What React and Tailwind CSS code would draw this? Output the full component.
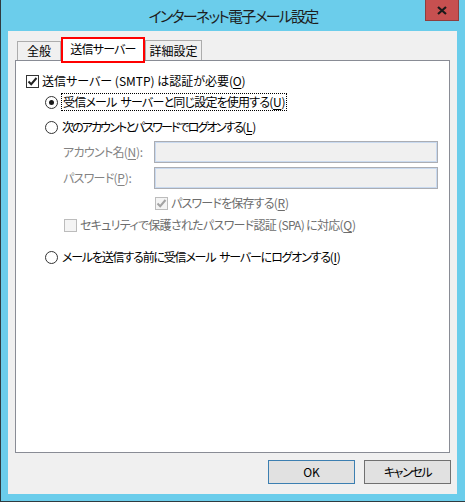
import React from "react";

const font = 'font-["Noto_Sans_CJK_JP",sans-serif] [font-feature-settings:"palt"_1]';

const Check = ({ checked, disabled }) => (
  <span
    className={`flex w-[13px] h-[13px] shrink-0 items-center justify-center border ${
      disabled ? "border-[#bcbcbc] bg-[#f4f4f4]" : "border-[#333333] bg-white"
    }`}
  >
    {checked && (
      <svg width="11" height="11" viewBox="0 0 11 11">
        <path
          d="M1.5 5.5 L4.2 8.2 L9.5 2"
          fill="none"
          stroke={disabled ? "#a3a3a3" : "#222222"}
          strokeWidth="2"
        />
      </svg>
    )}
  </span>
);

const Radio = ({ checked }) => (
  <span className="flex w-[13px] h-[13px] shrink-0 items-center justify-center rounded-full border border-[#333333] bg-white">
    {checked && <span className="w-[5px] h-[5px] rounded-full bg-[#1a1a1a]" />}
  </span>
);

const Key = ({ k }) => (
  <span className="tracking-[-0.3px]">
    (<span className="underline underline-offset-2">{k}</span>)
  </span>
);

const Gap = () => <span className="inline-block w-[4px]" />;

const Field = ({ label, k }) => (
  <div className="flex h-[22px] items-center">
    <span className="w-[91px] pl-[47px] box-content text-[#838383] whitespace-nowrap tracking-[-0.7px]">
      {label}
      <Key k={k} />:
    </span>
    <div className="h-[22px] w-[284px] border border-[#abadb3] bg-[#f0f0f0] shadow-[inset_0_0_0_1px_#c9daf0]" />
  </div>
);

export default function App() {
  return (
    <div
      className={`${font} w-[465px] h-[502px] bg-[#6bcdeb] border-l border-b border-[#2f3b40] flex flex-col text-[12px] leading-[18px] text-black`}
    >
      <div className="relative h-[31px] shrink-0">
        <div className="pt-[5px] text-center text-[15px] leading-[22px] text-[#1e1e1e] tracking-[-1.8px]">
          インターネット電子メール設定
        </div>
        <div className="absolute right-[6px] top-0 flex h-[21px] w-[34px] items-center justify-center border border-t-0 border-[#8e3e3e] bg-[#c75050]">
          <svg width="10" height="9" viewBox="0 0 10 9">
            <path d="M1 1 L9 8 M9 1 L1 8" stroke="#1a1a1a" strokeWidth="2.2" />
          </svg>
        </div>
      </div>

      <div className="ml-[7px] w-[449px] h-[463px] bg-[#f0f0f0] flex flex-col">
        <div className="mt-[6px] ml-[9px] flex h-[23px] items-end">
          <div className="h-[19px] w-[44px] border border-b-0 border-[#acacac] bg-[#f0f0f0] text-center leading-[18px]">
            全般
          </div>
          <div className="relative z-10 -mb-[3px] h-[26px] w-[84px] border-2 border-[#ff0000] bg-white text-center leading-[20px] tracking-[-0.8px]">
            送信サーバー
          </div>
          <div className="h-[20px] w-[57px] border border-b-0 border-[#acacac] bg-[#f0f0f0] text-center leading-[19px]">
            詳細設定
          </div>
        </div>

        <div className="ml-[7px] h-[393px] w-[435px] border border-[#898c95] bg-white pt-[11px] pl-[10px] flex flex-col">
          <div className="flex h-[18px] items-center gap-[3px]">
            <Check checked />
            <span className="whitespace-nowrap">
              送信サーバー (SMTP) は認証が必要<Key k="O" />
            </span>
          </div>

          <div className="mt-[3px] ml-[19px] flex h-[18px] items-center gap-[3px]">
            <Radio checked />
            <span className="h-[18px] whitespace-nowrap border border-dotted border-black px-[1px] leading-[16px] tracking-[-0.8px]">
              受信メール<Gap />サーバーと同じ設定を使用する<Key k="U" />
            </span>
          </div>

          <div className="mt-[7px] ml-[19px] flex h-[18px] items-center gap-[4px]">
            <Radio />
            <span className="whitespace-nowrap tracking-[-1.9px]">
              次のアカウントとパスワードでログオンする<Key k="L" />
            </span>
          </div>

          <div className="mt-[5px] -ml-[10px] flex flex-col gap-[4px]">
            <Field label="アカウント名" k="N" />
            <Field label="パスワード" k="P" />
          </div>

          <div className="mt-[5px] ml-[129px] flex h-[18px] items-center gap-[3px] text-[#6d6d6d]">
            <Check checked disabled />
            <span className="whitespace-nowrap tracking-[-0.8px]">
              パスワードを保存する<Key k="R" />
            </span>
          </div>

          <div className="mt-[4px] ml-[38px] flex h-[18px] items-center gap-[3px] text-[#6d6d6d]">
            <Check disabled />
            <span className="whitespace-nowrap tracking-[-0.7px]">
              セキュリティで保護されたパスワード認証 (SPA) に対応<Key k="Q" />
            </span>
          </div>

          <div className="mt-[14px] ml-[19px] flex h-[18px] items-center gap-[4px]">
            <Radio />
            <span className="whitespace-nowrap tracking-[-1.2px]">
              メールを送信する前に受信メール<Gap />サーバーにログオンする<Key k="I" />
            </span>
          </div>
        </div>

        <div className="mt-[7px] mr-[6px] flex justify-end gap-[9px]">
          <button className="h-[24px] w-[87px] border border-[#3c7fb1] bg-[#e1e1e1] leading-[22px]">
            OK
          </button>
          <button className="h-[24px] w-[87px] border border-[#707070] bg-[#e1e1e1] leading-[22px] tracking-[-1.4px]">
            キャンセル
          </button>
        </div>
      </div>
    </div>
  );
}
